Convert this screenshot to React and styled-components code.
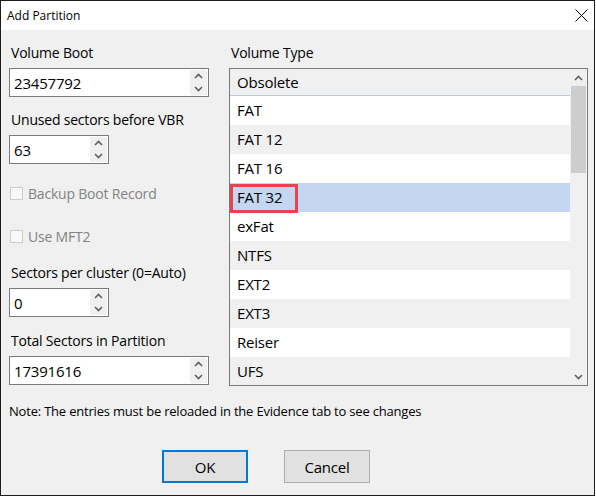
import React from 'react';
import styled, { createGlobalStyle } from 'styled-components';

const GlobalStyle = createGlobalStyle`
  body {
    margin: 0;
    background: #ffffff;
    font-family: "Open Sans", "Noto Sans", sans-serif;
  }
  * { box-sizing: border-box; }
`;

const Window = styled.div`
  width: 595px;
  height: 496px;
  border: 1px solid #1c1c1c;
  display: flex;
  flex-direction: column;
  background: #f0f0f0;
`;

const TitleBar = styled.div`
  height: 29px;
  flex-shrink: 0;
  background: #ffffff;
  display: flex;
  align-items: center;
  justify-content: space-between;
  padding: 0 6px 0 6px;
  font-size: 12px;
  color: #000;
`;

const CloseButton = styled.div`
  width: 14px;
  height: 14px;
  display: flex;
  align-items: center;
  justify-content: center;
`;

const Body = styled.div`
  flex: 1;
  display: flex;
  flex-direction: column;
  padding: 13px 0 0 8px;
  font-size: 14px;
  letter-spacing: -0.2px;
  color: #000;
`;

const Columns = styled.div`
  display: flex;
  gap: 20px;
`;

const LeftColumn = styled.div`
  width: 200px;
  display: flex;
  flex-direction: column;
`;

const RightColumn = styled.div`
  width: 359px;
  display: flex;
  flex-direction: column;
`;

const Field = styled.div`
  display: flex;
  flex-direction: column;
  margin-top: ${p => p.$top || 0}px;
`;

const Label = styled.div`
  height: 20px;
  line-height: 20px;
  padding-left: 2px;
  margin-bottom: 5px;
  color: #000;
`;

const SpinBox = styled.div`
  width: ${p => p.$width}px;
  height: 29px;
  background: #fff;
  border: 1px solid #7a7a7a;
  display: flex;
  align-items: stretch;
`;

const SpinValue = styled.div`
  flex: 1;
  display: flex;
  align-items: center;
  padding-left: 4px;
  font-size: 15px;
`;

const SpinButtons = styled.div`
  width: 17px;
  margin: 1px 1px 1px 0;
  background: #f0f0f0;
  display: flex;
  flex-direction: column;
  align-items: center;
  justify-content: space-around;
`;

const CheckRow = styled.div`
  height: 20px;
  display: flex;
  align-items: center;
  gap: 5px;
  margin-top: ${p => p.$top}px;
  color: #838383;
`;

const CheckBox = styled.div`
  width: 13px;
  height: 13px;
  border: 1px solid #cccccc;
  background: #f8f8f8;
  margin-left: 1px;
`;

const ListBox = styled.div`
  position: relative;
  height: 318px;
  border: 1px solid #7a7a7a;
  background: #fff;
  display: flex;
  overflow: hidden;
`;

const Rows = styled.div`
  flex: 1;
  display: flex;
  flex-direction: column;
`;

const GroupHeader = styled.div`
  height: 27px;
  flex-shrink: 0;
  background: #f0f0f0;
  border-bottom: 1px solid #b9cbe0;
  display: flex;
  align-items: center;
  padding: 0 0 1px 7px;
  font-size: 15px;
`;

const Row = styled.div`
  height: 29px;
  flex-shrink: 0;
  display: flex;
  align-items: center;
  padding: 0 0 1px 7px;
  font-size: 15px;
  background: ${p => (p.$selected ? '#c4d6f1' : p.$alt ? '#f0f0f0' : '#ffffff')};
`;

const Highlight = styled.div`
  position: absolute;
  left: 0;
  top: 115px;
  width: 68px;
  height: 29px;
  border: 3px solid #e9434c;
`;

const ScrollBar = styled.div`
  width: 17px;
  flex-shrink: 0;
  background: #f0f0f0;
  display: flex;
  flex-direction: column;
`;

const ScrollArrow = styled.div`
  height: 17px;
  display: flex;
  align-items: center;
  justify-content: center;
`;

const ScrollTrack = styled.div`
  flex: 1;
  padding: 0 1px;
`;

const ScrollThumb = styled.div`
  height: 87px;
  background: #cdcdcd;
`;

const Note = styled.div`
  margin-top: 15px;
  line-height: 20px;
  font-size: 13px;
  color: #000;
`;

const ButtonRow = styled.div`
  display: flex;
  gap: 36px;
  margin: 29px 0 0 153px;
`;

const Button = styled.div`
  width: 86px;
  height: 33px;
  background: #e1e1e1;
  border: ${p => (p.$default ? '2px solid #0078d7' : '1px solid #adadad')};
  display: flex;
  align-items: center;
  justify-content: center;
  font-size: 15px;
`;

function Chevron({ up, color = '#606060' }) {
  return (
    <svg width="9" height="6" viewBox="0 0 9 6">
      <path
        d={up ? 'M1 5 L4.5 1.5 L8 5' : 'M1 1 L4.5 4.5 L8 1'}
        fill="none"
        stroke={color}
        strokeWidth="1.6"
      />
    </svg>
  );
}

function Spinner({ value, width }) {
  return (
    <SpinBox $width={width}>
      <SpinValue>{value}</SpinValue>
      <SpinButtons>
        <Chevron up />
        <Chevron />
      </SpinButtons>
    </SpinBox>
  );
}

const types = ['FAT', 'FAT 12', 'FAT 16', 'FAT 32', 'exFat', 'NTFS', 'EXT2', 'EXT3', 'Reiser', 'UFS'];

export default function App() {
  return (
    <>
      <GlobalStyle />
      <Window>
        <TitleBar>
          <span>Add Partition</span>
          <CloseButton>
            <svg width="13" height="13" viewBox="0 0 13 13">
              <path d="M0.5 0.5 L12.5 12.5 M12.5 0.5 L0.5 12.5" stroke="#000" strokeWidth="1" />
            </svg>
          </CloseButton>
        </TitleBar>
        <Body>
          <Columns>
            <LeftColumn>
              <Field>
                <Label>Volume Boot</Label>
                <Spinner value="23457792" width={200} />
              </Field>
              <Field $top={13}>
                <Label>Unused sectors before VBR</Label>
                <Spinner value="63" width={100} />
              </Field>
              <CheckRow $top={19}>
                <CheckBox />
                <span>Backup Boot Record</span>
              </CheckRow>
              <CheckRow $top={23}>
                <CheckBox />
                <span>Use MFT2</span>
              </CheckRow>
              <Field $top={17}>
                <Label>Sectors per cluster (0=Auto)</Label>
                <Spinner value="0" width={100} />
              </Field>
              <Field $top={14}>
                <Label>Total Sectors in Partition</Label>
                <Spinner value="17391616" width={200} />
              </Field>
            </LeftColumn>
            <RightColumn>
              <Label>Volume Type</Label>
              <ListBox>
                <Rows>
                  <GroupHeader>Obsolete</GroupHeader>
                  {types.map((t, i) => (
                    <Row key={t} $alt={i % 2 === 1} $selected={t === 'FAT 32'}>
                      {t}
                    </Row>
                  ))}
                </Rows>
                <ScrollBar>
                  <ScrollArrow>
                    <Chevron up />
                  </ScrollArrow>
                  <ScrollTrack>
                    <ScrollThumb />
                  </ScrollTrack>
                  <ScrollArrow>
                    <Chevron />
                  </ScrollArrow>
                </ScrollBar>
                <Highlight />
              </ListBox>
            </RightColumn>
          </Columns>
          <Note>Note: The entries must be reloaded in the Evidence tab to see changes</Note>
          <ButtonRow>
            <Button $default>OK</Button>
            <Button>Cancel</Button>
          </ButtonRow>
        </Body>
      </Window>
    </>
  );
}
